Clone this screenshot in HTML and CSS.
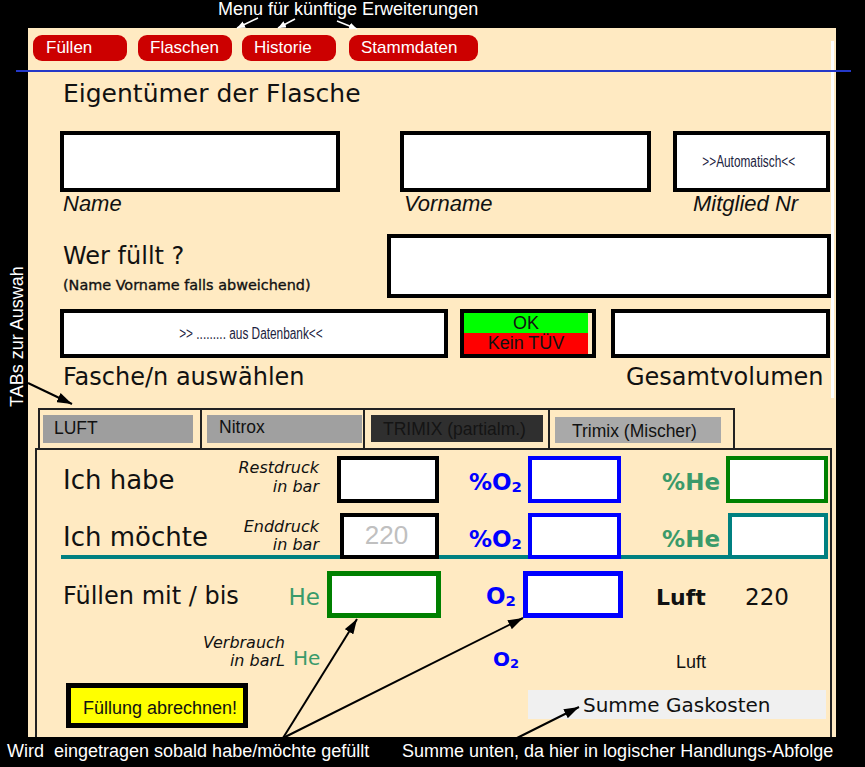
FILE: index.html
```html
<!DOCTYPE html>
<html lang="de">
<head>
<meta charset="utf-8">
<title>Füllen – Eigentümer der Flasche</title>
<link rel="stylesheet" href="styles.css">
</head>
<body>
<div class="page">
  <div class="topnote">Menu für künftige Erweiterungen</div>
  <div class="main">
    <div class="gutter"><span class="vnote">TABs zur Auswah</span></div>
    <div class="panel">
      <div class="upper">
        <nav class="menu">
          <span class="mbtn b1">Füllen</span>
          <span class="mbtn b2">Flaschen</span>
          <span class="mbtn b3">Historie</span>
          <span class="mbtn b4">Stammdaten</span>
        </nav>
        <div class="rule"></div>
        <h1 class="title">Eigentümer der Flasche</h1>
        <div class="row r1">
          <div class="field f-name"></div>
          <div class="field f-vorname"></div>
          <div class="field f-mitglied"><span class="narrow">&gt;&gt;Automatisch&lt;&lt;</span></div>
        </div>
        <div class="labels l1">
          <span class="lab-name">Name</span>
          <span class="lab-vorname">Vorname</span>
          <span class="lab-mitglied">Mitglied Nr</span>
        </div>
        <div class="row r-wer">
          <div class="wer-text">
            <div class="h2">Wer füllt ?</div>
            <div class="hint">(Name Vorname falls abweichend)</div>
          </div>
          <div class="field f-wer"></div>
        </div>
        <div class="row r3">
          <div class="field f-db"><span class="narrow">&gt;&gt; ......... aus Datenbank&lt;&lt;</span></div>
          <div class="tuv"><div class="ok">OK</div><div class="bad">Kein TÜV</div></div>
          <div class="field f-gesamt"></div>
        </div>
        <div class="l2 h2">
          <span class="lab-fasche">Fasche/n auswählen</span>
          <span>Gesamtvolumen</span>
        </div>
      </div>

      <div class="tabs">
        <div class="tab t1"><div class="fill">LUFT</div></div>
        <div class="tab t2"><div class="fill">Nitrox</div></div>
        <div class="tab t3"><div class="fill">TRIMIX (partialm.)</div></div>
        <div class="tab t4"><div class="fill">Trimix (Mischer)</div></div>
      </div>

      <div class="calc">
        <div class="ca">
          <div class="big">Ich habe</div>
          <div class="sub sub-a">Restdruck<br>in bar</div>
          <div class="box box-a1"></div>
          <div class="gas o2 gas-a">%O<span class="idx">2</span></div>
          <div class="box blue box-a2"></div>
          <div class="gas he gas-a he-a">%He</div>
          <div class="box green box-a3"></div>
        </div>
        <div class="cb">
          <div class="big big-b">Ich möchte</div>
          <div class="sub sub-b">Enddruck<br>in bar</div>
          <div class="box box-b1"><span class="ph">220</span></div>
          <div class="gas o2 gas-b">%O<span class="idx">2</span></div>
          <div class="box blue box-b2"></div>
          <div class="gas he gas-b he-b">%He</div>
          <div class="box teal box-b3"></div>
        </div>
        <div class="cc">
          <div class="fill-lab">Füllen mit / bis</div>
          <div class="c-he">He</div>
          <div class="box green thick box-c1"></div>
          <div class="c-o2">O<span class="idx">2</span></div>
          <div class="box blue thick box-c2"></div>
          <div class="c-luft">Luft</div>
          <div class="c-220">220</div>
        </div>
        <div class="cd">
          <div class="verb">Verbrauch<br>in barL</div>
          <div class="d-he">He</div>
          <div class="d-o2">O<span class="idx">2</span></div>
          <div class="d-luft">Luft</div>
        </div>
        <div class="ce">
          <div class="pay">Füllung abrechnen!</div>
          <div class="sum">Summe Gaskosten</div>
        </div>
      </div>
    </div>
  </div>
  <div class="footer">
    <span class="fn1">Wird  eingetragen sobald habe/möchte gefüllt</span>
    <span class="fn2">Summe unten, da hier in logischer Handlungs-Abfolge</span>
  </div>

  <svg class="arrows" width="865" height="767" viewBox="0 0 865 767" aria-hidden="true">
    <defs>
      <marker id="ah" markerUnits="userSpaceOnUse" markerWidth="15" markerHeight="10" refX="15" refY="5" orient="auto">
        <path d="M0,0 L15,5 L0,10 Z" fill="#000"/>
      </marker>
      <marker id="ahw" markerUnits="userSpaceOnUse" markerWidth="8" markerHeight="7" refX="8" refY="3.5" orient="auto">
        <path d="M0,0 L8,3.5 L0,7 Z" fill="#fff"/>
      </marker>
    </defs>
    <line x1="258" y1="18" x2="237" y2="28" stroke="#fff" stroke-width="1.5" marker-end="url(#ahw)"/>
    <line x1="295" y1="19" x2="278" y2="28" stroke="#fff" stroke-width="1.5" marker-end="url(#ahw)"/>
    <line x1="337" y1="21" x2="357" y2="29" stroke="#fff" stroke-width="1.5" marker-end="url(#ahw)"/>
    <line x1="28" y1="383" x2="72" y2="404" stroke="#000" stroke-width="2" marker-end="url(#ah)"/>
    <line x1="283" y1="738" x2="357" y2="619" stroke="#000" stroke-width="2" marker-end="url(#ah)"/>
    <line x1="283" y1="738" x2="523" y2="618" stroke="#000" stroke-width="2" marker-end="url(#ah)"/>
    <line x1="517" y1="738" x2="579" y2="707" stroke="#000" stroke-width="2" marker-end="url(#ah)"/>
  </svg>
</div>
</body>
</html>
```

FILE: styles.css
```css
* { box-sizing: border-box; margin: 0; padding: 0; }

body {
  margin: 0;
  width: 865px;
  height: 767px;
  overflow: hidden;
  background: #000;
  color: #111;
  font-family: "Liberation Sans", Arial, sans-serif;
}

.page { position: relative; width: 865px; height: 767px; }

.topnote {
  height: 28px;
  padding-left: 218px;
  color: #fff;
  font-size: 18px;
  line-height: 18px;
}

.main { display: flex; height: 709px; }

.gutter { width: 28px; flex: none; }

.vnote {
  display: block;
  writing-mode: vertical-rl;
  transform: rotate(180deg);
  color: #fff;
  font-size: 18px;
  line-height: 18px;
  width: 18px;
  height: 142px;
  margin-top: 237px;
  margin-left: 8px;
  white-space: nowrap;
}

.panel {
  width: 808px;
  flex: none;
  background: #ffeac2;
}

/* ---------- upper section ---------- */
.upper {
  display: flow-root;
  margin-top: 13px;
  width: 806px;
  height: 357px;
  border-right: 3px solid #fff;
}

.menu { display: flex; margin-top: -6px; height: 26px; padding-left: 5px; }
.mbtn {
  height: 26px;
  background: #cc0000;
  color: #fff;
  border-radius: 9px;
  font-size: 17px;
  line-height: 26px;
  padding-left: 13px;
  white-space: nowrap;
}
.b1 { width: 94px; }
.b2 { width: 94px; margin-left: 11px; padding-left: 12px; }
.b3 { width: 94px; margin-left: 10px; padding-left: 12px; }
.b4 { width: 129px; margin-left: 13px; padding-left: 12px; }

.rule {
  margin-top: 9px;
  margin-left: -12px;
  width: 835px;
  height: 2px;
  background: #2438c8;
}

.title {
  margin-top: 7px;
  margin-left: 35px;
  font-family: "DejaVu Sans", sans-serif;
  font-weight: normal;
  font-size: 25px;
  line-height: 30px;
}

.row { display: flex; }

.field {
  background: #fff;
  border: 4px solid #000;
  height: 100%;
}

.narrow {
  display: inline-block;
  font-family: "Liberation Sans", Arial, sans-serif;
  font-size: 16px;
  line-height: 18px;
  color: #1c2340;
  white-space: nowrap;
  transform: scaleX(0.74);
}

.r1 { margin-top: 22px; height: 61px; margin-left: 32px; }
.f-name { width: 280px; }
.f-vorname { width: 251px; margin-left: 60px; }
.f-mitglied {
  width: 157px;
  margin-left: 22px;
  display: flex;
  align-items: center;
  justify-content: center;
  padding-right: 6px;
}

.labels {
  display: flex;
  font-style: italic;
  font-size: 22px;
  line-height: 24px;
  height: 24px;
}
.lab-name { margin-left: 35px; width: 341px; }
.lab-vorname { width: 289px; }

.h2 {
  font-family: "DejaVu Sans", sans-serif;
  font-size: 24px;
  line-height: 28px;
}

.r-wer { margin-top: 18px; height: 64px; }
.wer-text { margin-left: 35px; width: 324px; padding-top: 8px; }
.hint {
  font-family: "DejaVu Sans", sans-serif;
  font-size: 14.4px;
  line-height: 16px;
  margin-top: 7px;
  -webkit-text-stroke: 0.35px #111;
  white-space: nowrap;
}
.f-wer { width: 444px; }

.r3 { margin-top: 11px; height: 49px; margin-left: 32px; }
.f-db {
  width: 388px;
  display: flex;
  align-items: center;
  justify-content: center;
  padding-right: 6px;
}
.tuv {
  width: 136px;
  margin-left: 12px;
  border: 4px solid #000;
  display: flex;
  flex-direction: column;
  font-size: 18px;
  text-align: center;
  padding-right: 4px;
}
.ok { background: #00ff00; height: 20px; line-height: 20px; }
.bad { background: #ff0000; flex: 1; line-height: 21px; }
.f-gesamt { width: 219px; margin-left: 15px; }

.l2 { display: flex; margin-top: 5px; height: 28px; }
.lab-fasche { margin-left: 35px; width: 563px; }

/* ---------- tabs ---------- */
.tabs {
  display: flex;
  margin-top: 10px;
  margin-left: 10px;
  width: 697px;
  height: 40px;
  border-top: 2px solid #222;
}
.tab {
  border-left: 2px solid #222;
  height: 38px;
  padding-top: 5px;
}
.fill {
  height: 28px;
  font-size: 17.5px;
  line-height: 20px;
  white-space: nowrap;
  color: #111;
  background: #9e9e9e;
}
.t1 { width: 162px; padding-left: 3px; }
.t1 .fill { width: 150px; padding: 3px 0 0 11px; }
.t2 { width: 163px; padding-left: 5px; }
.t2 .fill { width: 155px; padding: 1.5px 0 0 12px; background: #a0a0a0; }
.t3 { width: 185px; padding-left: 6px; }
.t3 .fill { width: 172px; height: 27px; padding: 4px 0 0 12px; background: #2f2f2f; color: #141414; }
.t4 { width: 187px; padding-left: 5px; padding-top: 7px; border-right: 2px solid #222; }
.t4 .fill { width: 166px; height: 26px; padding: 3.5px 0 0 17px; background: #a9a9a9; }

/* ---------- calculation area ---------- */
.calc {
  margin-left: 7px;
  width: 797px;
  height: 289px;
  border: 2px solid #222;
  border-bottom: none;
  padding-top: 6px;
}

.box { background: #fff; border: 4px solid #000; height: 47px; flex: none; }
.box.blue { border-color: #0000ff; }
.box.green { border-color: #008000; }
.box.teal { border-color: #008080; }
.box.thick { border-width: 5px; }

.big {
  font-family: "DejaVu Sans", sans-serif;
  font-size: 26px;
  line-height: 30px;
  width: 160px;
  padding-top: 9px;
  white-space: nowrap;
}
.sub {
  width: 96px;
  text-align: right;
  font-family: "DejaVu Sans", sans-serif;
  font-style: italic;
  font-size: 16px;
}
.gas {
  text-align: right;
  font-family: "DejaVu Sans", sans-serif;
  font-weight: bold;
  font-size: 23px;
  line-height: 27px;
  padding-top: 12.5px;
}
.o2 { color: #0000ff; }
.he { color: #3a9a6a; }
.idx { font-size: 0.65em; vertical-align: -0.15em; line-height: 0; }

.ca { display: flex; height: 47px; }
.ca .big { margin-left: 26px; }
.sub-a { line-height: 19px; padding-top: 2px; }
.box-a1 { margin-left: 18px; width: 102px; }
.gas-a { width: 89px; padding-right: 6px; }
.box-a2 { width: 93px; }
.he-a { width: 105px; }
.box-a3 { width: 102px; }

.cb {
  display: flex;
  margin-top: 10px;
  margin-left: 24px;
  width: 767px;
  height: 46px;
  border-bottom: 4px solid #008080;
}
.cb .box { height: 46px; }
.big-b { margin-left: 2px; }
.sub-b { line-height: 18px; padding-top: 4.5px; }
.box-b1 {
  margin-left: 21px;
  width: 99px;
  text-align: center;
  padding-right: 6px;
}
.ph {
  color: #c0c0c0;
  font-size: 26px;
  line-height: 30px;
  display: block;
  padding-top: 3px;
}
.gas-b { width: 89px; padding-right: 6px; }
.box-b2 { width: 93px; }
.he-b { width: 107px; padding-right: 8px; }
.box-b3 { width: 100px; }

.cc { display: flex; margin-top: 12px; height: 47px; }
.fill-lab {
  margin-left: 26px;
  width: 217px;
  font-family: "DejaVu Sans", sans-serif;
  font-size: 24px;
  line-height: 28px;
  padding-top: 10.5px;
  white-space: nowrap;
}
.c-he {
  width: 40px;
  text-align: right;
  color: #3a9a6a;
  font-family: "DejaVu Sans", sans-serif;
  font-size: 23px;
  line-height: 26px;
  padding-top: 13px;
}
.box-c1 { margin-left: 7px; width: 114px; }
.c-o2 {
  width: 82px;
  padding-right: 7px;
  text-align: right;
  color: #0000ff;
  font-family: "DejaVu Sans", sans-serif;
  font-weight: bold;
  font-size: 23px;
  line-height: 27px;
  padding-top: 12px;
}
.box-c2 { width: 100px; }
.c-luft {
  margin-left: 33px;
  width: 89px;
  font-family: "DejaVu Sans", sans-serif;
  font-weight: bold;
  font-size: 22px;
  line-height: 26px;
  padding-top: 13.5px;
}
.c-220 {
  font-family: "DejaVu Sans", sans-serif;
  font-size: 23px;
  line-height: 26px;
  padding-top: 13px;
}

.cd { display: flex; margin-top: 12px; height: 40px; }
.verb {
  margin-left: 26px;
  width: 222px;
  text-align: right;
  font-family: "DejaVu Sans", sans-serif;
  font-style: italic;
  font-size: 16px;
  line-height: 18px;
  padding-top: 3.5px;
}
.d-he {
  margin-left: 8px;
  width: 30px;
  color: #3a9a6a;
  font-family: "DejaVu Sans", sans-serif;
  font-size: 20px;
  line-height: 24px;
  padding-top: 15.5px;
}
.d-o2 {
  margin-left: 170px;
  width: 30px;
  color: #0000ff;
  font-family: "DejaVu Sans", sans-serif;
  font-weight: bold;
  font-size: 20px;
  line-height: 24px;
  padding-top: 16.5px;
}
.d-luft {
  margin-left: 153px;
  font-size: 18px;
  line-height: 20px;
  padding-top: 21.5px;
}

.ce { display: flex; margin-top: 13px; height: 46px; }
.pay {
  margin-left: 29px;
  width: 182px;
  height: 45px;
  border: 5px solid #000;
  background: #ffff00;
  font-size: 18px;
  line-height: 20px;
  padding: 9.5px 0 0 12px;
  white-space: nowrap;
}
.sum {
  margin-left: 280px;
  margin-top: 7px;
  width: 298px;
  height: 29px;
  background: #f0f0f0;
  font-family: "DejaVu Sans", sans-serif;
  font-size: 20px;
  line-height: 24px;
  padding: 3px 0 0 55px;
  white-space: nowrap;
}

/* ---------- footer notes ---------- */
.footer {
  display: flex;
  margin-top: 5px;
  color: #fff;
  font-size: 18px;
  line-height: 18px;
  white-space: pre;
}
.fn1 { margin-left: 7px; width: 395px; }

.arrows { position: absolute; left: 0; top: 0; pointer-events: none; }
```
